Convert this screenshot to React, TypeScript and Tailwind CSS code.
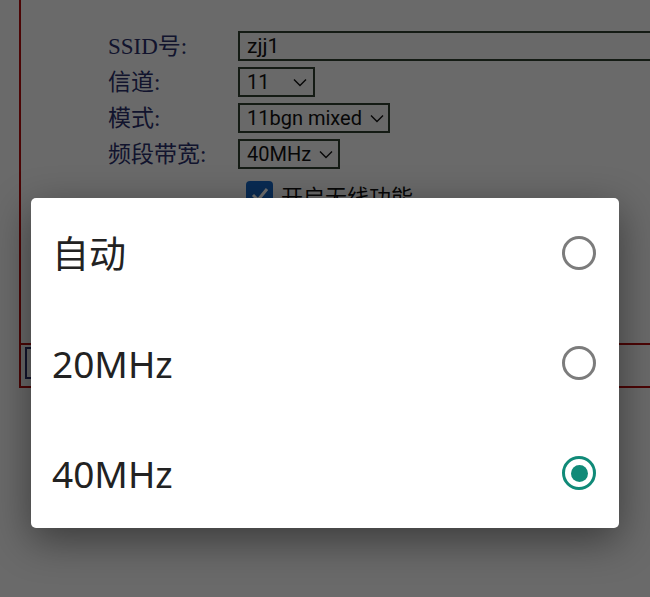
import React from 'react';

const labelFont = { fontFamily: '"Liberation Serif", "Noto Sans CJK SC", serif' };

function Chevron() {
    return (
        <svg width="14" height="9" viewBox="0 0 14 9" className="ml-2 shrink-0">
            <path d="M1 1.5 L7 7.5 L13 1.5" fill="none" stroke="#111" strokeWidth="1.4" />
        </svg>
    );
}

function FieldRow({ label, children }: { label: string; children: React.ReactNode }) {
    return (
        <div className="flex items-center h-[30px]">
            <div className="w-[130px] text-[23px] text-[#2a2f6a] leading-none whitespace-nowrap" style={labelFont}>
                {label}
            </div>
            {children}
        </div>
    );
}

function Select({ value, width }: { value: string; width: string }) {
    return (
        <div className={`flex items-center justify-between h-[30px] border-2 border-[#2f3f30] bg-[#f3f3f3] pl-[7px] pr-[6px] ${width}`}>
            <span className="text-[20px] text-[#111] leading-none whitespace-nowrap">{value}</span>
            <Chevron />
        </div>
    );
}

function Radio({ checked }: { checked?: boolean }) {
    if (checked) {
        return (
            <div className="w-[34px] h-[34px] rounded-full border-[3px] border-[#108a78] flex items-center justify-center">
                <div className="w-[17px] h-[17px] rounded-full bg-[#108a78]" />
            </div>
        );
    }
    return <div className="w-[34px] h-[34px] rounded-full border-[3px] border-[#7c7c7c]" />;
}

const options = [
    { label: '自动', checked: false },
    { label: '20MHz', checked: false },
    { label: '40MHz', checked: true },
];

export default function App() {
    return (
        <div
            className="relative w-[650px] h-[597px] overflow-hidden bg-[#f6f6f6]"
            style={{ fontFamily: 'Roboto, "Noto Sans CJK SC", sans-serif' }}
        >
            {/* page under the dialog */}
            <div className="ml-[19px]">
                <div className="h-[345px] border-l-2 border-b-2 border-[#b00c0c] pt-[31px] pl-[87px]">
                    <div className="flex flex-col gap-[6px]">
                        <FieldRow label="SSID号:">
                            <div className="flex-1 h-[30px] border-2 border-[#2f3f30] bg-[#f3f3f3] pl-[7px] flex items-center -mr-2">
                                <span className="text-[21px] text-[#111] leading-none">zjj1</span>
                            </div>
                        </FieldRow>
                        <FieldRow label="信道:">
                            <Select value="11" width="w-[77px]" />
                        </FieldRow>
                        <FieldRow label="模式:">
                            <Select value="11bgn mixed" width="w-[152px]" />
                        </FieldRow>
                        <FieldRow label="频段带宽:">
                            <Select value="40MHz" width="w-[102px]" />
                        </FieldRow>
                        <div className="flex items-start gap-2 pl-[138px] pt-[6px]">
                            <div className="w-[27px] h-[27px] rounded-[4px] bg-[#1565c0] flex items-center justify-center">
                                <svg width="20" height="20" viewBox="0 0 20 20">
                                    <path d="M3 10 L8 15 L17 4" fill="none" stroke="#fff" strokeWidth="3" />
                                </svg>
                            </div>
                            <span className="text-[22px] text-[#111] leading-none pt-[6px]">开启无线功能</span>
                        </div>
                    </div>
                </div>
                <div className="h-[43px] border-l-2 border-b-2 border-[#b00c0c] pl-[4px] pt-[2px]">
                    <div className="w-[60px] h-[32px] border-2 border-[#2a2f6a] bg-[#eee]" />
                </div>
            </div>

            {/* dim overlay */}
            <div className="absolute inset-0 bg-black/[0.57]" />

            {/* dialog */}
            <div className="absolute left-[31px] top-[198px] w-[588px] rounded-[5px] bg-white shadow-[0_12px_40px_rgba(0,0,0,0.45)] flex flex-col">
                {options.map((o) => (
                    <div key={o.label} className="h-[110px] flex items-center justify-between pl-[21px] pr-[23px]">
                        <span
                            className="text-[37px] text-[#222] leading-none"
                            style={{ fontFamily: '"Noto Sans", "Noto Sans CJK SC", sans-serif' }}
                        >
                            {o.label}
                        </span>
                        <Radio checked={o.checked} />
                    </div>
                ))}
            </div>
        </div>
    );
}
